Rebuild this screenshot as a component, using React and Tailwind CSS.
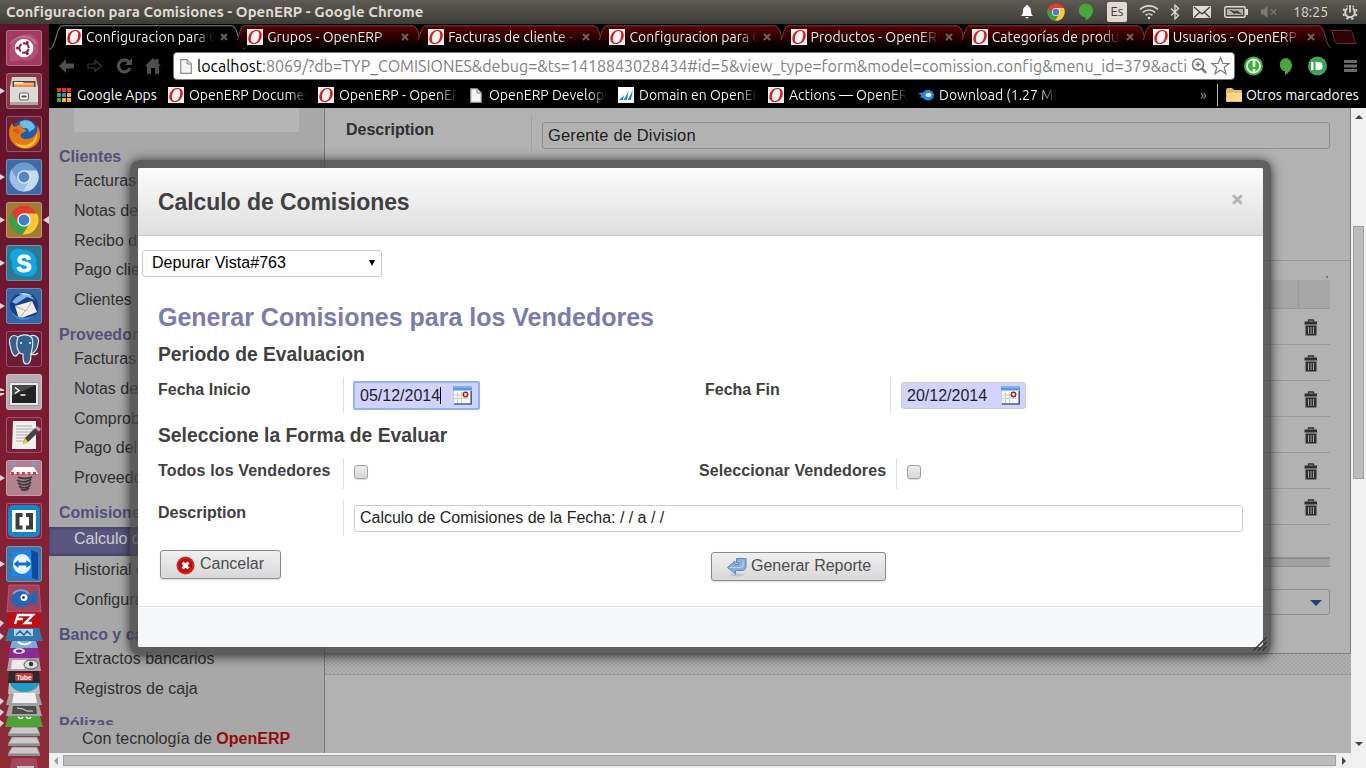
import React from "react";

const UI = "font-['Ubuntu','Noto_Sans',sans-serif] [font-variant-ligatures:none]";

/* ---------- shared small drawings ---------- */

function OpenErpIcon() {
  return (
    <svg width="16" height="16" viewBox="0 0 16 16" className="shrink-0">
      <rect width="16" height="16" fill="#f6f4f4" />
      <path fillRule="evenodd" d="M9.300.9c4 0 6 2.600 5.400 6.600-.6 4.400-3.800 7.600-7.900 7.600C2.900 15.100.8 12.600 1.400 8.500 2 4.200 5.200.9 9.300.9zM9.400 2C6.600 2 4.600 4.900 4 8.600c-.5 3.400.3 5.300 2.700 5.300 2.900 0 4.900-2.800 5.400-6.500C12.600 4 11.800 2 9.400 2z" fill="#d32020" />
    </svg>
  );
}

function PageIcon() {
  return (
    <svg width="12" height="15" viewBox="0 0 12 15" className="shrink-0">
      <path d="M.7.7H7L11.3 5v9.3H.7z" fill="#f4f4f4" stroke="#8a8a8a" strokeWidth="1.2" />
      <path d="M7 .7V5h4.3" fill="#ddd" stroke="#8a8a8a" strokeWidth="1" />
    </svg>
  );
}

function ChromeLogo({ size, a = "#e33b2e", b = "#fcc934", c = "#37a245", core = "#3f7fd0", rim = "#f3f3f3" }) {
  return (
    <svg width={size} height={size} viewBox="0 0 30 30">
      <circle cx="15" cy="15" r="14.5" fill={a} />
      <path d="M2.4 7.8A14.5 14.5 0 0 0 13.5 29.4L20.6 18.6 15 21.5 9.2 18.4z" fill={c} />
      <path d="M28 8.5H15L20.8 18.3 13.5 29.4A14.5 14.5 0 0 0 28 8.5z" fill={b} />
      <circle cx="15" cy="15" r="6.8" fill={rim} />
      <circle cx="15" cy="15" r="5.4" fill={core} />
    </svg>
  );
}

/* ---------- desktop panel ---------- */

function TopPanel() {
  return (
    <div className={`${UI} flex h-6 shrink-0 items-center bg-linear-to-b from-[#5d5b53] to-[#3d3c38] pl-[6px] text-[#dfdbd2]`}>
      <div className="w-[1012px] whitespace-nowrap text-[15px] font-bold leading-6">
        Configuracion para Comisiones - OpenERP - Google Chrome
      </div>
      <div className="flex items-center">
        <svg width="18" height="16" viewBox="0 0 18 16" fill="#fff">
          <path d="M9 1a1.3 1.3 0 0 1 1.3 1.2C12.5 3 13 5 13 7c0 2.500.8 3.500 2 5H3c1.200-1.500 2-2.500 2-5 0-2 .5-4 2.700-4.800A1.300 1.300 0 0 1 9 1zM7.400 13h3.200a1.600 1.600 0 0 1-3.200 0z" />
        </svg>
        <div className="ml-[11px]"><ChromeLogo size={18} /></div>
        <svg width="16" height="18" viewBox="0 0 16 18" className="ml-[13px]">
          <path d="M8 .5a7 7 0 0 1 7 7c0 5-4 8.500-7.500 10V14.500A7 7 0 0 1 8 .5z" fill="#4aa53c" />
        </svg>
        <div className="ml-[13px] flex h-5 w-5 items-center justify-center rounded-[2px] bg-[#dfdbd2] text-[13px] text-[#3c3b37]">Es</div>
        <svg width="20" height="16" viewBox="0 0 20 16" className="ml-[12px]" fill="none" stroke="#dfdbd2" strokeWidth="1.600">
          <path d="M1 5.500a13 13 0 0 1 18 0M3.800 8.500a9 9 0 0 1 12.400 0M6.600 11.300a5 5 0 0 1 6.800 0" />
          <circle cx="10" cy="14" r="1.300" fill="#dfdbd2" stroke="none" />
        </svg>
        <svg width="10" height="16" viewBox="0 0 10 16" className="ml-[11px]" fill="none" stroke="#dfdbd2" strokeWidth="1.300">
          <path d="M1 4.500l7.500 7L5 15V1l3.500 3.500-7.500 7" />
        </svg>
        <svg width="18" height="14" viewBox="0 0 18 14" className="ml-[13px]">
          <rect y="1" width="18" height="12" fill="#dfdbd2" />
          <path d="M1 2l8 7 8-7M1 12.500l6-5.500M17 12.500L11 7" fill="none" stroke="#3c3b37" strokeWidth="1.200" />
        </svg>
        <svg width="25" height="14" viewBox="0 0 25 14" className="ml-[13px]">
          <rect x=".8" y="1.800" width="20.400" height="10.400" rx="1.500" fill="none" stroke="#dfdbd2" strokeWidth="1.500" />
          <rect x="3" y="4" width="16" height="6" fill="#b7b3aa" />
          <path d="M5 4.500l7 2 .5-1.500 6 4.500-7-1.500-.5 1.500z" fill="#3c3b37" />
          <path d="M23 4v6" stroke="#dfdbd2" strokeWidth="2" />
        </svg>
        <svg width="18" height="14" viewBox="0 0 18 14" className="ml-[11px]">
          <path d="M1 4.500h2.500L7.500 1v12l-4-3.500H1z" fill="#7d7a73" />
          <path d="M11 4.500l5 5M16 4.500l-5 5" stroke="#7d7a73" strokeWidth="1.400" />
        </svg>
        <div className="ml-[15px] w-[36px] whitespace-nowrap text-[14px] leading-6">18:25</div>
        <svg width="16" height="16" viewBox="0 0 16 16" className="ml-[13px]" fill="none" stroke="#dfdbd2">
          <circle cx="8" cy="8.500" r="4.800" strokeWidth="2" />
          <circle cx="8" cy="8.500" r="6.700" strokeWidth="1.800" strokeDasharray="2.200 3.060" strokeDashoffset="-1.600" />
          <path d="M8 0v8.500" strokeWidth="5" stroke="#4d4b45" />
          <path d="M8 1v7.500" strokeWidth="1.800" />
        </svg>
      </div>
    </div>
  );
}

/* ---------- launcher ---------- */

function Swirl() {
  return (
    <svg width="36" height="36" viewBox="0 0 36 36">
      <path d="M5 32C0 18 8 5 22 4c8 0 12 8 10 17-2 8-10 11-16 9" fill="#c66c8c" opacity=".45" />
      <path d="M4 14C12 3 26 5 30 14" fill="none" stroke="#e2a7bb" opacity=".5" strokeWidth="1.500" />
      <circle cx="18" cy="18" r="9.300" fill="#fff" />
      <circle cx="18" cy="18" r="4.700" fill="none" stroke="#8d1d46" strokeWidth="2" strokeDasharray="8.300 1.540" strokeDashoffset="-.8" />
      <g fill="#8d1d46"><circle cx="11.500" cy="18" r="1.500" /><circle cx="21.300" cy="12.400" r="1.500" /><circle cx="21.300" cy="23.600" r="1.500" /></g>
    </svg>
  );
}

function Cabinet() {
  return (
    <svg width="36" height="36" viewBox="0 0 36 36">
      <path d="M6 4h24l2 10v18H4V14z" fill="#d3d0cb" />
      <rect x="6.500" y="8" width="23" height="6" fill="#4a4541" />
      <path d="M8 9.500h20v4.500H8z" fill="#f28a3c" /><path d="M8 9h9l1 1.500h10v1H8z" fill="#fbd9b4" />
      <rect x="4" y="14" width="28" height="18" rx="1" fill="#dcdad6" />
      <rect x="4" y="29" width="28" height="3" fill="#a9a7a2" />
      <rect x="13.500" y="20" width="9" height="7" rx="1.500" fill="#f7f7f7" stroke="#6d6964" strokeWidth="1.200" /><path d="M15.500 23.500h5" stroke="#55504b" strokeWidth="2" />
    </svg>
  );
}

function Firefox() {
  return (
    <svg width="36" height="36" viewBox="0 0 36 36">
      <circle cx="19" cy="17" r="13.500" fill="#1f5dab" />
      <path d="M14 6c6-4 13-1 15 5-1 4-4 2-5 5-2 0-1-4-4-4-3 1-4-1-6-2z" fill="#6fbdea" />
      <path d="M3 17c0-5 2-8 3-10 1 3 2 4 4 4 2-2 4-3 6-3-1 2-1 3 0 4l4 2c0 2-3 2-5 4-1 2 0 4 3 5 4 0 6 0 9-2 4-3 5-7 4-12 6 9 3 20-6 23C14 35 3 28 3 17z" fill="#e87817" />
      <path d="M9 26c6 5 18 5 22-9 1 9-5 15-13 15-4 0-8-3-9-6z" fill="#f7c02d" />
      <path d="M6 14l5-2 4 4-4 2z" fill="#d65a10" />
    </svg>
  );
}

function Skype() {
  return (
    <svg width="36" height="36" viewBox="0 0 36 36">
      <path d="M4 12C4 4 12 2 17 5c8-1 15 6 13 14 4 7-3 15-11 12C11 32 4 25 6 17c-1-2-2-3-2-5z" fill="#12a5e4" />
      <text x="18" y="26.500" textAnchor="middle" fontSize="23" fontWeight="bold" fontFamily="Liberation Sans" fill="#fff" stroke="#fff" strokeWidth=".8">S</text>
    </svg>
  );
}

function Thunderbird() {
  return (
    <svg width="36" height="36" viewBox="0 0 36 36">
      <path d="M4 22C2 8 14 2 23 5c9 3 11 14 8 20-3 8-22 10-27-3z" fill="#1b3f83" />
      <path d="M6 14C12 5 23 4 29 12l-8-3-11 7z" fill="#7fb3e6" />
      <path d="M12 6c5-2 11-1 14 2l-8-1z" fill="#b5d6f2" />
      <path d="M9 18l17-5 5 11-18 7z" fill="#f1eee6" /><path d="M9 18l11 5 6-10M13 31l6-8" fill="none" stroke="#b5ac9b" />
      <path d="M3 18c3 10 13 15 26 9-6 8-23 8-26-9z" fill="#3f86cf" />
    </svg>
  );
}

function Elephant() {
  return (
    <svg width="36" height="36" viewBox="0 0 36 36">
      <g fill="#36618c" stroke="#dfe8f0" strokeWidth="1.200">
        <path d="M12 6C6 2 2 7 4 14c1 6 3 12 6 11l4-4z" />
        <path d="M24 5c6-2 10 2 8 8-1 6-4 9-7 10l-3-5z" />
        <path d="M12 6c4-3 11-3 14 1 2 6 0 11-1 16 0 6-1 10-4 10-4 0-4-4-4-10-5 0-8-8-5-17z" />
        <path d="M24 23c3 1 6 1 8-1" fill="none" />
      </g>
      <circle cx="15" cy="12" r="1" fill="#fff" /><circle cx="24" cy="12" r="1" fill="#fff" />
    </svg>
  );
}

function TerminalIcon() {
  return (
    <svg width="36" height="36" viewBox="0 0 36 36">
      <rect x="3.500" y="8.500" width="29" height="23" fill="#e9e9e9" stroke="#9a9a9a" />
      <rect x="6" y="11" width="24" height="18" fill="#222" /><path d="M6 11h24L6 22z" fill="#4a4a4a" />
      <path d="M9 13.500l4 3-4 3M14.500 21h5" fill="none" stroke="#fff" strokeWidth="1.500" />
    </svg>
  );
}

function Editor() {
  return (
    <svg width="36" height="36" viewBox="0 0 36 36">
      <path d="M7 4h23v28H6z" fill="#efefec" /><path d="M10 9h16M10 12h17M10 15h15M10 18h12M10 21h10M10 24h8" stroke="#aaa" />
      <path d="M17 27l2-6L29 11l4 3.500L22 25z" fill="#444" /><path d="M17 27l2-6 3 4z" fill="#e8cf4d" /><path d="M29 11l2-2 4 3-2 2.500z" fill="#e58fc0" />
    </svg>
  );
}

function Spring() {
  return (
    <svg width="36" height="36" viewBox="0 0 36 36">
      <path d="M4 4l6 1M6 2l5 1M32 4l-6 1M30 2l-5 1" stroke="#7e9fd4" />
      <path d="M8 7h20l4 7H4z" fill="#fff" /><path d="M5 13.500h27" stroke="#de3b35" strokeWidth="3" strokeDasharray="3 2.500" />
      <path d="M12 17c3 2 11 2 14 0M11 20c4 3 12 2 14-1M12 23c4 3 11 2 13-1M13 26c3 3 10 2 11-1M15 29c2 2 7 1 8-1" fill="none" stroke="#3c3c3c" strokeWidth="1.800" />
    </svg>
  );
}

function Brackets() {
  return (
    <svg width="36" height="36" viewBox="0 0 36 36">
      <rect x="2" y="2" width="32" height="32" rx="5" fill="#1287cf" /><rect x="6" y="7" width="24" height="22" fill="#fff" />
      <path d="M16.500 12h-5v12.500h5M20 12h5v12.500h-5" fill="none" stroke="#3d3d3d" strokeWidth="4" />
    </svg>
  );
}

function TeamViewer() {
  return (
    <svg width="36" height="36" viewBox="0 0 36 36">
      <path d="M6 5l19-1 7 3v27l-6-2-20-2z" fill="#0c62c8" /><path d="M25 4l7 3v27l-6-2z" fill="#084a9e" /><path d="M6 5l19-1 1 28-20-2z" fill="#1d84ee" />
      <ellipse cx="16" cy="18" rx="9" ry="10" fill="#eef6fd" />
      <path d="M7.500 18l5-4v2.500h8V14l5 4-5 4v-2.500h-8V22z" fill="#0e6fd6" />
    </svg>
  );
}

const LAUNCHERS = [
  { bg: "bg-[#a23a62]", el: <Swirl /> },
  { bg: "bg-[#8a3547]", el: <Cabinet />, run: 1 },
  { bg: "bg-[#6b2038]", el: <Firefox /> },
  { bg: "bg-[#3d6ba6]", el: <ChromeLogo size={30} a="#6d9bd0" b="#c6daf0" c="#9dbfe3" core="#5487c4" rim="#dfeaf6" />, run: 1 },
  { bg: "bg-[#a07c36]", el: <ChromeLogo size={30} />, run: 1, focus: 1 },
  { bg: "bg-[#2f7892]", el: <Skype />, run: 1 },
  { bg: "bg-[#3466a2]", el: <Thunderbird />, run: 1 },
  { bg: "bg-[#6b1b34]", el: <Elephant /> },
  { bg: "bg-[#b5aeb3]", el: <TerminalIcon />, run: 2 },
  { bg: "bg-[#7d1c38]", el: <Editor /> },
  { bg: "bg-[#b0818f]", el: <Spring />, run: 1 },
  { bg: "bg-[#8c2138]", el: <Brackets /> },
  { bg: "bg-[#3d76a8]", el: <TeamViewer />, run: 1 },
];

function RunMark({ run }) {
  return (
    <svg width="6" height="8" viewBox="0 0 6 8" className="shrink-0">
      {run === 1 && <path d="M0 1l5 3-5 3z" fill="#dcd3d6" />}
      {run === 2 && <path d="M0 0l4 1.500L4 3H0zM0 5h4v1.500L0 8z" fill="#dcd3d6" />}
    </svg>
  );
}

function FoldedStack() {
  return (
    <svg width="49" height="186" viewBox="0 582 49 186" className="shrink-0">
      <path d="M9 585h30l2 27H7z" fill="#a5415a" stroke="#b5667a" strokeWidth=".8" />
      <path d="M37 589l-7 7c-3-7-16-7-19 2-1 11 15 12 20 4l6 5z" fill="#2566b4" />
      <path d="M13 594c4-5 12-5 16 0" fill="none" stroke="#6fa5e0" strokeWidth="2" />
      <circle cx="24" cy="597.500" r="3.500" fill="#fff" /><circle cx="23.500" cy="597.500" r="1.300" fill="#222" />
      <path d="M9 612h30l2 16H6z" fill="#be1014" />
      <path d="M15 624l3-9h7M17 619h6M24 615h9l-8 8h7" fill="none" stroke="#fff" strokeWidth="2.300" />
      <path d="M9 628h30l4 13H5z" fill="#3576ab" /><path d="M14 629h19v7H14z" fill="#b9d4e8" /><path d="M16 635l4-4 4 4 3-4 4 4" fill="none" stroke="#2a639a" strokeWidth="1.500" />
      <path d="M12 641h24l2 7H10z" fill="#7caed8" /><path d="M18 642c4 3 9 3 13 0" fill="none" stroke="#fff" strokeWidth="2" />
      <path d="M10 648h28l2 10H8z" fill="#8c2a94" /><ellipse cx="19" cy="651" rx="6" ry="3" fill="#e8d8ee" /><ellipse cx="19" cy="651" rx="3" ry="1.500" fill="#6d2a7c" />
      <path d="M9 658h30l2 13H7z" fill="#b39aa6" /><path d="M12 660h15l-3 9H11z" fill="#f0e8ee" />
      <ellipse cx="31" cy="664.500" rx="7" ry="4.500" fill="#ddd" stroke="#555" /><circle cx="31" cy="664" r="2.200" fill="#333" />
      <path d="M9 671h30l1 12H8z" fill="#2d2a2b" /><rect x="15" y="673" width="18" height="8" rx="2" fill="#c93434" />
      <text x="16.500" y="680" fontSize="6.500" fontFamily="Liberation Sans" fontWeight="bold" fill="#fff">Tube</text>
      <path d="M9 683h30l1 11H8z" fill="#bcbcbc" /><path d="M10 683h29c-3 12-26 12-29 0z" fill="#1e9cc5" />
      <path d="M9 694h30l3 11H6z" fill="#a3a0a1" /><path d="M14 693h21l2 10H12z" fill="#f0f0f0" />
      <path d="M9 705h30l3 11H6z" fill="#aaa4a7" /><path d="M13 706h23l1 8H12z" fill="#4d4d4d" /><path d="M17 708l6 1 4 2h6" fill="none" stroke="#e3e3e3" />
      <path d="M8 716h32l3 11H5z" fill="#4ea335" /><path d="M18 717c2 2 4 2 5 0M26 717c2 2 4 2 5 0" fill="none" stroke="#fff" strokeWidth="1.500" />
      <g fill="#c9c9c9" stroke="#777" strokeWidth=".8">
        <path d="M12 727h25l3 7H8z" /><path d="M12 737h25l3 7H8z" /><path d="M12 747h25l3 7H8z" />
      </g>
      <g fill="#8d8d8d"><path d="M8 734h32v2H8zM8 744h32v2H8zM8 754h32v2H8z" /></g>
      <path d="M12 758h24l2 10H10z" fill="#a3485c" /><path d="M17 766h17v2H17z" fill="#c9c9c9" />
      <g fill="#dcd3d6"><path d="M0 620l4 3-4 4zM0 633l4 3-4 4zM0 698l4 3-4 4zM0 709l4 3-4 4zM0 720l4 3-4 4z" /></g>
    </svg>
  );
}

function Launcher() {
  return (
    <div className="flex w-[49px] shrink-0 flex-col bg-linear-to-b from-[#5c1229] via-[#7b1834] to-[#8f2c38] pt-[6px]">
      <div className="flex flex-col gap-[7px]">
        {LAUNCHERS.map((l, i) => (
          <div key={i} className="flex items-center">
            <RunMark run={l.run} />
            <div className={`flex size-9 items-center justify-center overflow-hidden rounded-[3px] ring-1 ring-inset ring-white/25 ${l.bg}`}>{l.el}</div>
            {l.focus && <svg width="6" height="8" viewBox="0 0 6 8" className="ml-px"><path d="M6 0v8L0 4z" fill="#dcd3d6" /></svg>}
          </div>
        ))}
      </div>
      <FoldedStack />
    </div>
  );
}

/* ---------- browser chrome ---------- */

const TABS = [
  "Configuracion para Comisiones",
  "Grupos - OpenERP",
  "Facturas de cliente - OpenERP",
  "Configuracion para Comisiones",
  "Productos - OpenERP",
  "Categorías de productos",
  "Usuarios - OpenERP",
];

function TabStrip() {
  return (
    <div className="flex h-[26px] shrink-0">
      {TABS.map((t, i) => (
        <div key={i} className="relative flex h-[26px] w-[181.15px] shrink-0 items-center pl-[17px]">
          <svg width="196" height="26" viewBox="0 0 196 26" className="absolute left-0 top-0">
            <defs>
              <linearGradient id="tabred" x1="0" y1="0" x2="0" y2="1"><stop offset="0" stopColor="#5c0000" /><stop offset=".85" stopColor="#0c0000" /><stop offset="1" stopColor="#000" /></linearGradient>
            </defs>
            {i === 0 ? (
              <path d="M0 25.500C7 25 7 3 13 1.800H183C190 3 189 24 196 24.500" fill="#000" stroke="#8a8a8a" />
            ) : (
              <path d="M6 19C10 14 9 3 14 1.800H183C190 3 189 22 195 24H8z" fill="url(#tabred)" stroke="none" />
            )}
            {i > 0 && <path d="M7 16C10 10 10 3 14 1.800H183C190 3 189 22 195 24" fill="none" stroke="#6a4545" />}
          </svg>
          <div className="relative flex items-center">
            <OpenErpIcon />
            <span className="ml-[4px] w-[128px] overflow-hidden whitespace-nowrap bg-linear-to-r from-white from-85% to-transparent bg-clip-text text-[14px] leading-5 text-transparent">{t}</span>
            <svg width="8" height="8" viewBox="0 0 8 8" className="ml-[6px]"><path d="M1 1l6 6M7 1L1 7" stroke="#6e6060" strokeWidth="2" /></svg>
          </div>
        </div>
      ))}
      <svg width="32" height="26" viewBox="0 0 32 26" className="relative ml-[12px] shrink-0">
        <path d="M1.500 6.500h20c3 1 3 12 6 13h-20C4 18 5 8 1.500 6.500z" fill="#2c0303" stroke="#6a3030" />
      </svg>
    </div>
  );
}

function NavIcons() {
  return (
    <svg width="124" height="30" viewBox="0 0 124 30" className="shrink-0">
      <path d="M17 8l-7 7 7 7v-4.500h8v-5h-8z" fill="#4f4f4f" />
      <path d="M46 9.500l6.500 5.500-6.500 5.500v-3.500h-7v-4h7z" fill="none" stroke="#3a3a3a" strokeWidth="1.200" />
      <path d="M80 11a6 6 0 1 0 1 6" fill="none" stroke="#4f4f4f" strokeWidth="3.200" /><path d="M83 7v7h-7z" fill="#4f4f4f" />
      <path d="M96 15l8-8 2.500 2.500V8h3v4.500l2.500 2.500h-2v8h-4v-6h-4v6h-4v-8z" fill="#4f4f4f" />
    </svg>
  );
}

function Toolbar() {
  return (
    <div className="flex h-[32px] shrink-0 items-center">
      <NavIcons />
      <div className="flex h-[28px] w-[1062px] items-center rounded-[4px] border border-[#777] bg-white">
        <div className="ml-[6px] flex w-[13px]"><PageIcon /></div>
        <div className="ml-[4px] w-[991px] overflow-hidden whitespace-nowrap text-[16px] leading-6 text-[#808080]">
          <span className="text-black">localhost</span>:8069/?db=TYP_COMISIONES&amp;debug=&amp;ts=1418843028434#id=5&amp;view_type=form&amp;model=comission.config&amp;menu_id=379&amp;action=399
        </div>
        <svg width="46" height="22" viewBox="0 0 46 22" className="shrink-0" fill="none" stroke="#777">
          <circle cx="10" cy="9.500" r="5.500" strokeWidth="1.500" /><path d="M7.500 9.500h5M10 7v5" strokeWidth="1.300" /><path d="M14 13.500l4 4.500" strokeWidth="2.600" />
          <path d="M32.500 2.500l2.300 6h6.200l-4.800 4 1.800 6.300-5.500-3.700-5.500 3.700 1.800-6.300-4.800-4h6.200z" strokeWidth="1.200" />
        </svg>
      </div>
      <svg width="130" height="30" viewBox="1236 0 130 30" className="shrink-0">
        <circle cx="1254.500" cy="15" r="9.500" fill="#3fae3c" /><circle cx="1254.500" cy="15" r="6.600" fill="none" stroke="#d8f2d2" strokeWidth="1.800" />
        <path d="M1255 8v8M1255 18v3" stroke="#fff" strokeWidth="2.600" />
        <path d="M1286 7a7 7 0 0 1 7 7c0 5-4 8.500-7 10v-3.500A7 7 0 0 1 1286 7z" fill="#4aa53c" />
        <circle cx="1318.500" cy="15" r="9.500" fill="#3fa456" /><rect x="1312" y="11" width="2.500" height="8" fill="#fff" /><path d="M1316.500 11h3a4 4 0 0 1 0 8h-3z" fill="#fff" />
        <path d="M1345 10.500h13M1345 15h13M1345 19.500h13" stroke="#6a6a6a" strokeWidth="3" />
      </svg>
    </div>
  );
}

function Bookmark({ w, icon, text }) {
  return (
    <div className={`flex shrink-0 items-center gap-[5px] overflow-hidden ${w}`}>
      {icon}
      <span className="w-[118px] overflow-hidden whitespace-nowrap bg-linear-to-r from-white from-85% to-transparent bg-clip-text text-[14px] leading-5 text-transparent">{text}</span>
    </div>
  );
}

function BookmarksBar() {
  return (
    <div className="flex h-[26px] shrink-0 items-center pl-[8px] text-[14px] leading-5 text-white">
      <svg width="14" height="14" viewBox="0 0 14 14" className="mr-[6px]">
        <g fill="#e3342b"><path d="M0 0h4v4H0zM5 0h4v4H5zM10 0h4v4h-4z" /></g>
        <path d="M0 5h4v4H0zM0 10h4v4H0z" fill="#3aa757" /><path d="M5 5h4v4H5z" fill="#3b7ded" /><path d="M10 5h4v4h-4zM5 10h4v4H5zM10 10h4v4h-4z" fill="#fbb412" />
      </svg>
      <span className="w-[91px] whitespace-nowrap">Google Apps</span>
      <Bookmark w="w-[150px]" icon={<OpenErpIcon />} text="OpenERP Documentation" />
      <Bookmark w="w-[152px]" icon={<OpenErpIcon />} text="OpenERP - OpenERP" />
      <Bookmark w="w-[148px]" icon={<div className="w-[14px] shrink-0"><PageIcon /></div>} text="OpenERP Developers" />
      <Bookmark w="w-[150px]" icon={<svg width="16" height="16" viewBox="0 0 16 16" className="shrink-0"><rect width="16" height="16" fill="#fff" /><path d="M1 13l5-5-1 5zM5.500 13l5-8.500-1.500 8.500zM9.500 13l5.500-10.500-2 10.500z" fill="#2d8ac0" /></svg>} text="Domain en OpenERP" />
      <Bookmark w="w-[150px]" icon={<OpenErpIcon />} text="Actions — OpenERP" />
      <Bookmark w="w-[282px]" icon={<svg width="16" height="14" viewBox="0 0 16 14" className="shrink-0"><path d="M0 5l5-.5A6 6 0 0 1 16 7a6 5.500 0 0 1-11 3L1 9l3-1z" fill="#2587e8" /><ellipse cx="10.500" cy="7" rx="2.800" ry="2" fill="#fff" /></svg>} text="Download (1.27 MB)" />
      <span className="w-[17px] text-[#9a9a9a]">»</span>
      <div className="mr-[8px] h-[22px] w-px bg-[#bbb]" />
      <svg width="16" height="14" viewBox="0 0 16 14" className="mr-[4px] shrink-0"><path d="M0 2q0-2 2-2h4l2 2h7q1 0 1 1v11H0z" fill="#e9b765" /><path d="M1 5h15v8H1z" fill="#ffd78d" /></svg>
      <span className="whitespace-nowrap">Otros marcadores</span>
    </div>
  );
}

/* ---------- OpenERP page ---------- */

function Heading({ children }) {
  return <div className="mt-[11.600px] h-[18.400px] pl-[10px] font-bold leading-[18.400px] text-[#54507c]">{children}</div>;
}
function Item({ children }) {
  return <div className="h-[29.600px] pl-[25px] leading-[29.600px]">{children}</div>;
}

function Sidebar() {
  return (
    <div className="flex w-[276px] shrink-0 flex-col border-r border-[#77777f] bg-[#a8a8a8] text-[16px] text-[#2f2f2f]">
      <div className="h-[617px] overflow-hidden whitespace-nowrap">
        <div className="mb-[16px] ml-[25px] h-[24px] w-[225px] bg-[#b5b5b5]" />
        <div>
          <Heading>Clientes</Heading>
          <Item>Facturas de cliente</Item>
          <Item>Notas de crédito</Item>
          <Item>Recibo de ventas</Item>
          <Item>Pago cliente</Item>
          <Item>Clientes</Item>
          <Heading>Proveedores</Heading>
          <Item>Facturas de proveedor</Item>
          <Item>Notas de crédito</Item>
          <Item>Comprobantes</Item>
          <Item>Pago del proveedor</Item>
          <Item>Proveedores</Item>
          <Heading>Comisiones</Heading>
          <div className="-mb-[1px] mt-[5px] h-[29px] bg-[#5a567f] pl-[25px] leading-[23px] text-[#d0d0d0] shadow-[inset_0_2px_3px_rgba(0,0,0,.2),inset_0_-2px_3px_rgba(0,0,0,.2)]">Calculo de Comisiones</div>
          <Item>Historial de Comisiones</Item>
          <Item>Configuracion</Item>
          <Heading>Banco y cajas</Heading>
          <Item>Extractos bancarios</Item>
          <Item>Registros de caja</Item>
          <Heading>Pólizas</Heading>
        </div>
      </div>
      <div className="pl-[33px] leading-[27px]">Con tecnología de <b className="text-[#920b0b]">OpenERP</b></div>
    </div>
  );
}

function Trash() {
  return (
    <svg width="14" height="17" viewBox="0 0 14 17">
      <path d="M4.500 2.500V1h5v1.500" fill="none" stroke="#2f2f2f" strokeWidth="1.300" />
      <path d="M.5 2.500h12.500v3H.5zM1.500 6.500h11v10h-11z" fill="#2f2f2f" />
      <path d="M4.500 8v7M7 8v7M9.500 8v7" stroke="#a0a0a0" strokeWidth="1" />
    </svg>
  );
}

function MainForm() {
  return (
    <div className="flex grow flex-col bg-[#b2b2b2] text-[16px] text-[#2f2f2f]">
      <div className="flex h-[546px] flex-col border-b border-r border-[#7d7d88]">
        <div className="flex h-[152px] shrink-0 pl-[21px] pr-[20px]">
          <div className="w-[185px] pt-[12px] font-bold leading-[19px]">Description</div>
          <div className="mt-[7px] h-[36px] w-px bg-[#a2a2a2]" />
          <div className="ml-[10px] mt-[14px] h-[27px] grow rounded-[3px] border border-[#8f8f8f] pl-[5px] text-[16.5px] leading-[25px] tracking-[0.15px] text-[#1c1c1c]">Gerente de Division</div>
        </div>
        <div className="h-px shrink-0 bg-[#999]" />
        <div className="flex h-[19px] shrink-0 justify-end pr-[22px] pt-[15px]"><span className="size-[2px] bg-[#777]" /></div>
        <div className="mr-[20px] flex shrink-0 flex-col">
          <div className="flex h-[29px] justify-end border-b border-[#999] bg-[#a6a6a6]"><div className="w-[32px] border-l border-[#999]" /></div>
          {[0, 1, 2, 3, 4, 5].map((r) => (
            <div key={r} className="flex h-[36px] items-center justify-end border-b border-[#999] pr-[12px] pt-[2px]"><Trash /></div>
          ))}
          <div className="mt-[32px] h-[10px] border-b border-t-2 border-b-[#8d8d8d] border-t-[#8d8d8d] bg-[#a2a2a2]" />
          <div className="mt-[22px] flex h-[26px] items-center justify-end rounded-[3px] border border-[#8f8f8f] pr-[7px] pt-[2px]">
            <svg width="12" height="6" viewBox="0 0 12 6"><path d="M0 0h12L6 6z" fill="#213f78" /></svg>
          </div>
        </div>
      </div>
      <div className="h-[21px] border-b border-[#999] bg-[conic-gradient(#a4a4a4_25%,#b0b0b0_0_50%,#a4a4a4_0_75%,#b0b0b0_0)] bg-[length:4px_4px]" />
    </div>
  );
}

function VScroll() {
  return (
    <div className="flex w-[15px] shrink-0 flex-col items-center bg-[#f0f0f0] py-[7px]">
      <svg width="8" height="4" viewBox="0 0 8 4"><path d="M4 0l4 4H0z" fill="#444" /></svg>
      <div className="mt-[107px] h-[253px] w-[11px] border border-[#a0a0a0] bg-[#bcbcbc]" />
      <svg width="8" height="4" viewBox="0 0 8 4" className="mt-auto"><path d="M0 0h8L4 4z" fill="#444" /></svg>
    </div>
  );
}

function HScroll() {
  return (
    <div className="flex h-[15px] shrink-0 items-center bg-[#f0f0f0] pl-[5px]">
      <svg width="4" height="8" viewBox="0 0 4 8"><path d="M4 0v8L0 4z" fill="#999" /></svg>
      <div className="ml-[5px] h-[11px] w-[1273px] border border-[#a0a0a0] bg-[#bcbcbc]" />
      <svg width="4" height="8" viewBox="0 0 4 8" className="ml-[6px]"><path d="M0 0l4 4-4 4z" fill="#444" /></svg>
    </div>
  );
}

/* ---------- dialog ---------- */

function CalendarIcon() {
  return (
    <svg width="19" height="19" viewBox="0 0 19 19">
      <rect x=".5" y=".5" width="18" height="18" fill="#f7f7f2" stroke="#c8cede" />
      <rect width="19" height="4.500" fill="#5c96ea" /><rect width="19" height="2" fill="#7fb1f5" />
      <path d="M4.500 6v11M8.500 6v11M1 9h11M1 12.500h15" stroke="#d0d0cc" />
      <path d="M1 18h17.200V5" fill="none" stroke="#46618f" strokeWidth="1.600" />
      <circle cx="12.500" cy="8.500" r="2.200" fill="#fff" stroke="#a3192b" strokeWidth="1.500" />
    </svg>
  );
}

function DateField({ value, active }) {
  return (
    <div className={`flex items-center border bg-[#d2d2ff] text-[#1f1f1f] ${active ? "ml-[9px] mt-[4px] h-[29px] w-[127px] rounded-[2px] border-2 border-[#8db4f0] pl-[5px] pr-[6px]" : "ml-[10px] mt-[5px] h-[27px] w-[125px] rounded-[3px] border-[#ccc] pl-[5px] pr-[5px]"}`}>
      <span className="leading-[25px]">{value}</span>
      {active && <span className="h-[17px] w-px bg-black" />}
      <span className="ml-auto"><CalendarIcon /></span>
    </div>
  );
}

function Check() {
  return <div className="ml-[10px] mt-[7px] size-[14px] rounded-[3px] border border-[#a3a3a3] bg-linear-to-b from-[#ececec] to-[#d8d8d8] shadow-[0_1px_1px_rgba(0,0,0,.15)]" />;
}

function Button({ icon, children, className }) {
  return (
    <div className={`flex h-[29px] items-center rounded-[3px] border border-[#8c8c8c] bg-linear-to-b from-[#efefef] to-[#d8d8d8] text-[#4c4c4c] shadow-[0_1px_2px_rgba(0,0,0,.15)] ${className}`}>
      {icon}
      <span className="-mt-[2px] whitespace-nowrap leading-6">{children}</span>
    </div>
  );
}

function Dialog() {
  return (
    <div className="absolute left-[130px] top-[160px] h-[495px] w-[1141px] rounded-[9px] bg-[#444]/75 p-[8px] shadow-[0_1px_12px_rgba(0,0,0,.75)]">
      <div className="flex h-[479px] w-[1125px] flex-col overflow-hidden rounded-[2px] bg-white text-[16px] text-[#404040]">
        <div className="flex h-[68px] shrink-0 items-center justify-between border-b border-[#cacaca] bg-linear-to-b from-[#fcfcfc] to-[#dedede] pl-[20px] pr-[20px]">
          <div className="text-[23px] font-bold leading-[28px] tracking-[-0.070px]">Calculo de Comisiones</div>
          <svg width="11" height="11" viewBox="0 0 11 11" className="-mt-[5px]"><path d="M1.200 1.200l8.600 8.600M9.800 1.200L1.200 9.800" stroke="#b3b3b3" strokeWidth="3" /></svg>
        </div>
        <div className="h-[370px] shrink-0 px-[20px]">
          <div className="-ml-[16px] mt-[14px] flex h-[27px] w-[240px] items-center justify-between rounded-[3px] border border-[#ccc] pl-[9px] pr-[6px] text-black">
            <span className="-mt-[2px] leading-6 tracking-[0.05px]">Depurar Vista#763</span>
            <svg width="6" height="6" viewBox="0 0 6 6" className="-mt-[2px]"><path d="M0 0h6L3 6z" fill="#000" /></svg>
          </div>
          <div className="mt-[24px] text-[25px] font-bold leading-[32px] text-[#7c7bad]">Generar Comisiones para los Vendedores</div>
          <div className="mt-[10px] text-[19.300px] font-bold leading-[24px]">Periodo de Evaluacion</div>
          <div className="mt-[10px] flex h-[36px]">
            <div className="w-[185px] pt-[3px] font-bold leading-[19px]">Fecha Inicio</div>
            <div className="w-px bg-[#ddd]" />
            <div className="w-[361px]"><DateField value="05/12/2014" active /></div>
            <div className="w-[185px] pt-[3px] font-bold leading-[19px]">Fecha Fin</div>
            <div className="w-px bg-[#ddd]" />
            <DateField value="20/12/2014" />
          </div>
          <div className="mt-[11px] text-[19.300px] font-bold leading-[24px]">Seleccione la Forma de Evaluar</div>
          <div className="mt-[10px] flex h-[31px]">
            <div className="w-[185px] pt-[3px] font-bold leading-[19px] tracking-[0.150px]">Todos los Vendedores</div>
            <div className="w-px bg-[#ddd]" />
            <div className="w-[355px]"><Check /></div>
            <div className="w-[197px] pt-[3px] font-bold leading-[19px] tracking-[0.100px]">Seleccionar Vendedores</div>
            <div className="w-px bg-[#ddd]" />
            <Check />
          </div>
          <div className="mt-[11px] flex h-[36px]">
            <div className="w-[185px] pt-[3px] font-bold leading-[19px]">Description</div>
            <div className="w-px bg-[#ddd]" />
            <div className="ml-[10px] mt-[5px] h-[27px] w-[889px] rounded-[3px] border border-[#ccc] pl-[5px] leading-[24px] tracking-[-0.020px] text-[#1f1f1f]">Calculo de Comisiones de la Fecha: / / a / /</div>
          </div>
          <div className="mt-[14px] flex">
            <Button className="ml-[2px] w-[121px] pl-[15px]" icon={
              <svg width="19" height="19" viewBox="0 0 19 19" className="mr-[5px] mt-px"><circle cx="9.500" cy="9.500" r="9" fill="#d62424" /><circle cx="9.500" cy="9.500" r="7" fill="#bf0b0b" /><path d="M6.500 6.500l6 6M12.500 6.500l-6 6" stroke="#fff" strokeWidth="3" /></svg>
            }>Cancelar</Button>
            <Button className="ml-[430px] mt-[2px] w-[175px] pl-[14px]" icon={
              <svg width="21" height="20" viewBox="0 0 21 20" className="mr-[4px]">
                <ellipse cx="11" cy="18" rx="7" ry="1.500" fill="#c4c4c4" />
                <path d="M1.500 10.500L9 4v3.500h3.500V6H10.500V1.500H20v7.500q0 4.500-4 4.500H9.500v3.500z" fill="#87afd8" stroke="#5d88b8" strokeWidth="1" />
                <path d="M4 10.500h10q3 0 3-3V3.500" fill="none" stroke="#b7d0ea" strokeWidth="1.200" />
              </svg>
            }>Generar Reporte</Button>
          </div>
        </div>
        <div className="grow border-t border-[#ddd] bg-[#f5f7f9] shadow-[inset_0_1px_0_#fff]" />
      </div>
      <svg width="14" height="14" viewBox="0 0 14 14" className="absolute bottom-[4px] right-[4px]">
        <path d="M4 10L10 4v6z" fill="#e8e8e8" />
        <path d="M.5 13.500L13.500.5M5 13.500l8.500-8.500M9.500 13.500l4-4" stroke="#333" strokeWidth="1.500" />
      </svg>
    </div>
  );
}

export default function App() {
  return (
    <div className="relative flex h-[768px] w-[1366px] flex-col overflow-hidden font-['Liberation_Sans',Arial,sans-serif]">
      <TopPanel />
      <div className="flex h-[744px]">
        <Launcher />
        <div className="flex w-[1317px] flex-col">
          <div className={`${UI} flex flex-col bg-black`}>
            <TabStrip />
            <Toolbar />
            <BookmarksBar />
          </div>
          <div className="flex h-[645px]">
            <Sidebar />
            <MainForm />
            <VScroll />
          </div>
          <HScroll />
        </div>
      </div>
      <Dialog />
    </div>
  );
}
